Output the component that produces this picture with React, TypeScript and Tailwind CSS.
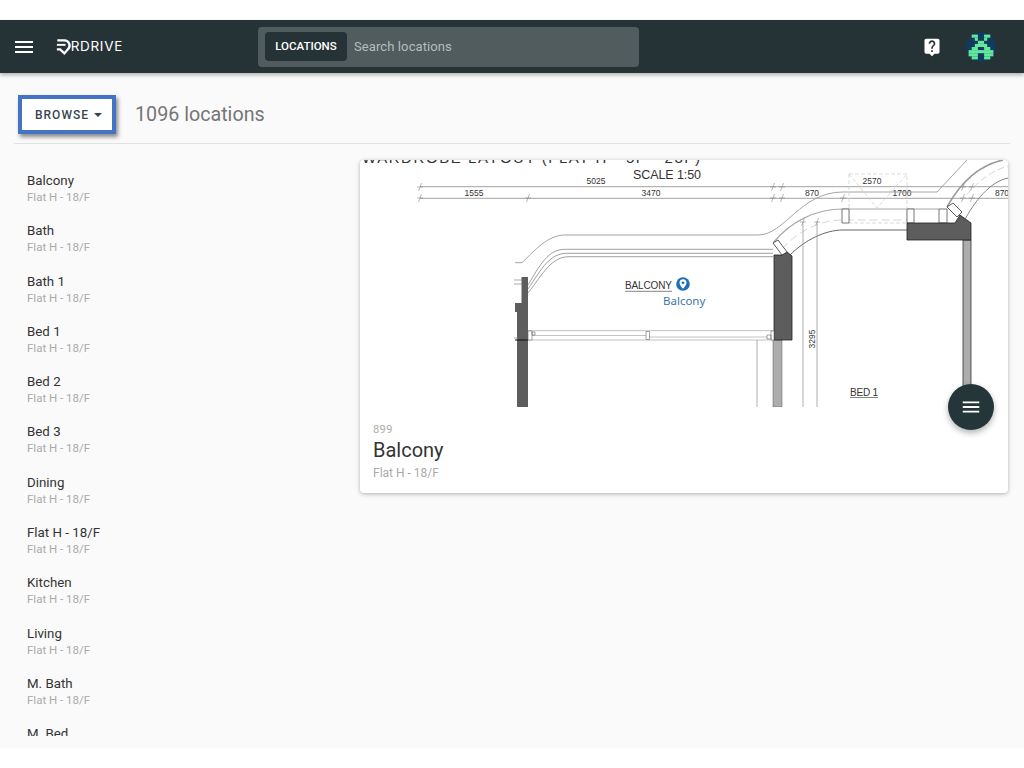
import { MdLiveHelp, MdMenu } from 'react-icons/md'

const places = [
  'Balcony',
  'Bath',
  'Bath 1',
  'Bed 1',
  'Bed 2',
  'Bed 3',
  'Dining',
  'Flat H - 18/F',
  'Kitchen',
  'Living',
  'M. Bath',
  'M. Bed',
]

const invader = [
  [1, 0, 2, 1], [5, 0, 2, 1],
  [2, 1, 1, 1], [5, 1, 1, 1],
  [3, 2, 2, 1],
  [2, 3, 4, 1],
  [1, 4, 2, 1], [5, 4, 2, 1],
  [0, 5, 8, 1],
  [0, 6, 3, 1], [5, 6, 3, 1],
  [1, 7, 2, 1], [5, 7, 2, 1],
]

function Logo() {
  return (
    <svg width="18" height="19" viewBox="0 0 18 19" fill="none">
      <path d="M1.5 2.5H9.5A6 6 0 0 1 14 12.6" stroke="white" strokeWidth="2.6" />
      <path d="M1 7.6H11" stroke="white" strokeWidth="2.2" />
      <path d="M1 12.8H4.8L9.6 17.4L14.2 12" stroke="white" strokeWidth="2.6" />
    </svg>
  )
}

function Avatar() {
  return (
    <svg className="block" width="30" height="30" viewBox="0 0 30 30">
      <circle cx="15" cy="15" r="15" fill="#123a5c" />
      {invader.map(([x, y, w, h], i) => (
        <rect key={i} x={2.6 + x * 3.1} y={2.6 + y * 3.1} width={w * 3.1} height={h * 3.1} fill="#62e79c" />
      ))}
    </svg>
  )
}

function Tick({ x, y }: { x: number; y: number }) {
  return <path d={`M${x - 1.5} ${y + 4}L${x + 1.5} ${y - 4}M${x - 3} ${y}H${x + 3}`} stroke="#888" strokeWidth="0.6" />
}

function FloorPlan() {
  const dim = 'font-["Liberation_Sans",sans-serif]'
  return (
    <svg className="block h-[247px] w-[648px]" viewBox="360 160 648 247" fill="none">
      <g className={dim} fill="#333" stroke="none">
        <text x="362" y="162.5" fontSize="15" textLength="338">WARDROBE LAYOUT (FLAT H - 5F - 23F)</text>
        <text x="633" y="178.5" fontSize="12.5" textLength="68">SCALE 1:50</text>
        <text x="596" y="184" fontSize="8.5" textAnchor="middle">5025</text>
        <text x="474" y="196" fontSize="8.5" textAnchor="middle">1555</text>
        <text x="651" y="196" fontSize="8.5" textAnchor="middle">3470</text>
        <text x="812" y="196" fontSize="8.5" textAnchor="middle">870</text>
        <text x="872" y="184" fontSize="8.5" textAnchor="middle">2570</text>
        <text x="902" y="196" fontSize="8.5" textAnchor="middle">1700</text>
        <text x="1002" y="196" fontSize="8.5" textAnchor="middle">870</text>
        <text x="815" y="339" fontSize="8.5" textAnchor="middle" transform="rotate(-90 815 339)">3295</text>
        <text x="625" y="289" fontSize="10" textLength="47">BALCONY</text>
        <text x="850" y="396" fontSize="10" textLength="28">BED 1</text>
      </g>
      <g stroke="#8a8a8a" strokeWidth="0.8">
        <path d="M420 186.7H1008M420 198.3H1008" />
        <path d="M625 291.3H672M850 397.5H878" stroke="#666" />
      </g>
      {[420, 773, 782, 963, 972].map((x) => <Tick key={x} x={x} y={187} />)}
      {[420, 528, 773, 782, 843, 963, 972].map((x) => <Tick key={x} x={x} y={198} />)}
      <Tick x={803} y={222} />
      <Tick x={817} y={222} />

      {/* outer outline */}
      <path d="M515 262.7H522C535 250 548 235 565 235H758C785 235 800 192 843 192H937L967 160" stroke="#9a9a9a" strokeWidth="0.9" />
      <path d="M963 223C975 200 990 182 1008 178" stroke="#777" strokeWidth="0.9" />
      <path d="M947 207C962 180 980 165 1003 160" stroke="#999" strokeWidth="1.6" />
      <path d="M955 211C970 188 985 173 1008 166" stroke="#ccc" strokeWidth="0.8" strokeDasharray="7 3" />

      {/* balcony wall lines */}
      <path d="M528 285C540 265 548 249.3 565 249.3H773" stroke="#888" strokeWidth="0.8" />
      <path d="M528 289C542 268 550 253.3 567 253.3H773" stroke="#888" strokeWidth="0.8" />
      <path d="M528 293C544 272 552 256.7 569 256.7H773" stroke="#888" strokeWidth="0.8" />

      {/* curved corridor */}
      <path d="M773 243C790 222 815 209 843 209H939" stroke="#aaa" strokeWidth="1.2" />
      <path d="M790 255C805 240 825 230 843 230H907" stroke="#555" strokeWidth="0.9" />
      <path d="M782 249C798 231 820 220 843 220H907" stroke="#ccc" strokeWidth="0.8" strokeDasharray="8 4" />

      {/* dashed opening */}
      <path d="M849 174H907V223H849ZM849 174L877 208L907 174" stroke="#ccc" strokeWidth="0.7" strokeDasharray="4 2" />
      <path d="M842 209H849V223H842ZM907 209H914V223H907ZM939 209H947V223H939Z" fill="white" stroke="#555" strokeWidth="0.8" />

      {/* right wall */}
      <path d="M963 240H971V407H963Z" fill="#adadad" stroke="#333" strokeWidth="0.8" />
      <path d="M907 223H955L960 215L971 223V240H907Z" fill="#5d5d5d" stroke="#222" strokeWidth="0.8" />
      <path d="M947 207L953 203L962 212L957 217Z" fill="white" stroke="#333" strokeWidth="0.8" />

      {/* centre wall */}
      <path d="M773 340H782V407H773Z" fill="#adadad" stroke="#555" strokeWidth="0.5" />
      <path d="M774 255H782L787 252L792 256V340H774Z" fill="#5d5d5d" stroke="#222" strokeWidth="0.8" />
      <path d="M773 243L778 240L787 252L782 255Z" fill="white" stroke="#333" strokeWidth="0.8" />

      {/* left wall */}
      <path d="M521.5 277H528V407H517V312H515V303H521.5Z" fill="#5d5d5d" />
      <path d="M515 340H528" stroke="#111" strokeWidth="1" />
      <path d="M514 280H522M514 284H522M514 338H518" stroke="#888" strokeWidth="0.7" />

      {/* railing */}
      <path d="M528 330.7H774M528 335.5H648M648 337H770M528 340H774" stroke="#bbb" strokeWidth="0.9" />
      <path d="M528 331H532V340H528ZM646 331.5H649.5V339.5H646ZM771 331H774V340H771ZM532 332H535V335H532ZM767 335H771V339H767Z" fill="white" stroke="#666" strokeWidth="0.6" />

      {/* dimension verticals */}
      <path d="M803 222V407M817 222V407M757 340V407" stroke="#999" strokeWidth="0.8" />

      {/* location pin */}
      <circle cx="683" cy="284" r="6.8" fill="#1d6fb8" />
      <path d="M683 279.3a3.5 3.5 0 0 0-3.5 3.5c0 2.4 3.5 6 3.5 6s3.5-3.6 3.5-6a3.5 3.5 0 0 0-3.5-3.5z" fill="white" />
      <circle cx="683" cy="282.8" r="1.4" fill="#1d6fb8" />
      <text x="663" y="304.7" fontSize="11.5" fill="#3d76ab" className='font-["Noto_Sans",sans-serif]'>Balcony</text>
    </svg>
  )
}

export default function App() {
  return (
    <div className='flex h-[768px] flex-col bg-white py-5 font-["Roboto",sans-serif]'>
      <header className="z-10 flex h-[53px] shrink-0 items-center bg-[#263336] shadow-[0_2px_4px_rgba(0,0,0,0.3)]">
        <MdMenu className="ml-3 text-white" size={24} />
        <div className="ml-[20px] flex w-[67px] items-center">
          <Logo />
          <span className='-ml-[1px] font-["Inter",sans-serif] text-[13.5px] font-normal tracking-[0.7px] text-white'>RDRIVE</span>
        </div>
        <div className="ml-[135px] flex h-10 w-[381px] items-center rounded bg-[#515c5f] px-[7px]">
          <div className="flex h-[29px] w-[82px] items-center justify-center rounded bg-[#263336] text-[11.5px] font-medium text-white">
            LOCATIONS
          </div>
          <span className="ml-[7px] text-[13px] tracking-[0.1px] text-[#b6bcbd]">Search locations</span>
        </div>
        <MdLiveHelp className="ml-[283px] text-white" size={20} />
        <div className="ml-[24px]">
          <Avatar />
        </div>
      </header>

      <main className="flex min-h-0 flex-1 flex-col bg-[#fafafa]">
        <div className="mx-[14px] flex h-[71px] shrink-0 items-center border-b border-[#e2e2e2] pt-[13px]">
          <button className="ml-1 flex h-[39px] w-[98px] items-center justify-center gap-[5px] border-4 border-[#4472c4] bg-white pl-[3px] text-xs font-medium tracking-[1px] text-[#37474f] shadow-[2px_3px_4px_rgba(0,0,0,0.45)]">
            BROWSE
            <span className="h-0 w-0 border-x-[4.5px] border-t-[4.5px] border-x-transparent border-t-[#37474f]" />
          </button>
          <h1 className="ml-[19px] text-[19.7px] font-normal text-[#757575]">1096 locations</h1>
        </div>

        <div className="flex min-h-0 flex-1 pb-3">
          <ul className="ml-[27px] mt-[28px] w-[333px] shrink-0 overflow-hidden">
            {places.map((place) => (
              <li key={place} className="h-[50.3px]">
                <div className="text-[13.3px] leading-[18px] text-[#333]">{place}</div>
                <div className="text-[11.5px] leading-[14px] text-[#aaa]">Flat H - 18/F</div>
              </li>
            ))}
          </ul>

          <section className="mt-4 h-[333px] w-[648px] shrink-0 rounded bg-white shadow-[0_1px_4px_rgba(0,0,0,0.3)]">
            <div className="relative h-[247px]">
              <FloorPlan />
              <button className="absolute -bottom-[23px] right-[14px] flex h-[46px] w-[46px] items-center justify-center rounded-full bg-[#24363a] text-white shadow-[0_3px_6px_rgba(0,0,0,0.3)]">
                <MdMenu size={22} />
              </button>
            </div>
            <div className="px-[13px] pt-[16px]">
              <div className="text-[11px] leading-[14px] tracking-[0.4px] text-[#aaa]">899</div>
              <h2 className="mt-[1px] text-xl font-normal leading-[24px] text-[#333]">Balcony</h2>
              <div className="mt-[4px] text-xs leading-[14px] text-[#aaa]">Flat H - 18/F</div>
            </div>
          </section>
        </div>
      </main>
    </div>
  )
}
